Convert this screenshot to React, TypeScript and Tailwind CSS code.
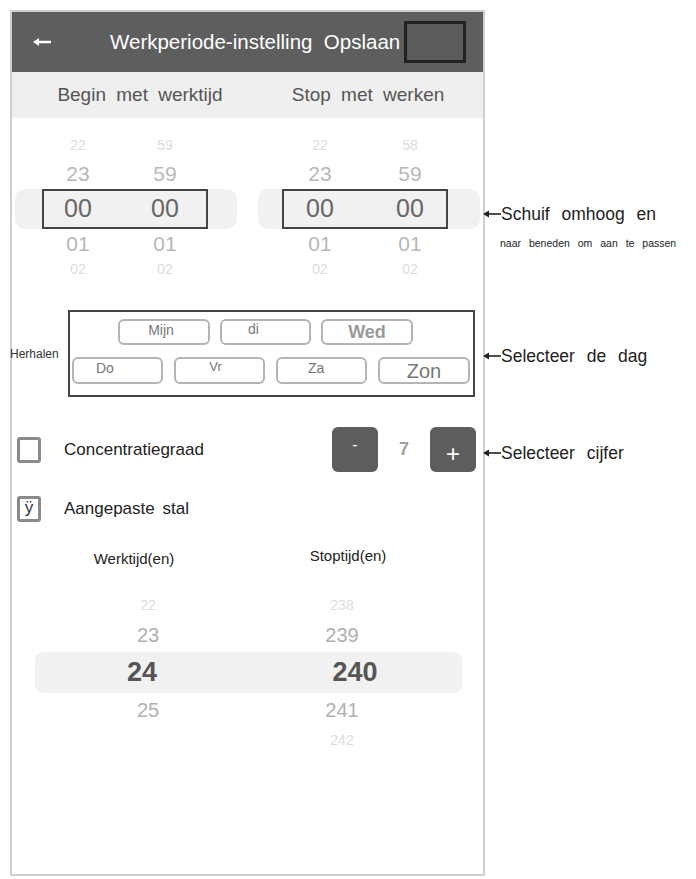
import React from 'react';

const font = { fontFamily: '"Liberation Sans", Arial, sans-serif' };

function SmallArrow() {
  return (
    <svg width="18" height="8" viewBox="0 0 18 8" className="shrink-0">
      <path d="M0 4 L6 0.5 L6 7.5 Z" fill="#222" />
      <line x1="5" y1="4" x2="18" y2="4" stroke="#222" strokeWidth="1.6" />
    </svg>
  );
}

function Callout({ top, children }: any) {
  return (
    <div className="absolute left-[483px] flex items-center" style={{ top }}>
      <SmallArrow />
      <span className="text-[17.5px] text-[#222] [word-spacing:7px]">{children}</span>
    </div>
  );
}

function TimeRow({ vals, kind }: { vals: string[]; kind: 'far' | 'near' | 'sel' }) {
  const txt =
    kind === 'far'
      ? 'text-[14px] text-[#dcdcdc]'
      : kind === 'near'
        ? 'text-[21px] text-[#b8b8b8]'
        : 'text-[25px] text-[#666]';
  const band = kind === 'sel' ? 'bg-[#f1f1f1]' : '';
  const box = kind === 'sel' ? 'border-[#444]' : 'border-transparent';
  return (
    <div className="flex h-full">
      <div className={`ml-[3px] w-[222px] h-full rounded-[10px] ${band} flex`}>
        <div className={`ml-[27px] w-[166px] h-full border-2 ${box} flex items-center pl-[4px] gap-[27px]`}>
          <span className={`w-[60px] text-center ${txt}`}>{vals[0]}</span>
          <span className={`w-[60px] text-center ${txt}`}>{vals[1]}</span>
        </div>
      </div>
      <div className={`ml-[21px] w-[222px] h-full rounded-[10px] ${band} flex`}>
        <div className={`ml-[24px] w-[166px] h-full border-2 ${box} flex items-center pl-[6px] gap-[30px]`}>
          <span className={`w-[60px] text-center ${txt}`}>{vals[2]}</span>
          <span className={`w-[60px] text-center ${txt}`}>{vals[3]}</span>
        </div>
      </div>
    </div>
  );
}

function DayBtn({ label, w, cls }: any) {
  return (
    <div
      className={`h-full rounded-[6px] border-2 border-[#b4b4b4] text-[#777] flex ${cls}`}
      style={{ width: w }}
    >
      {label}
    </div>
  );
}

function Check({ mark }: { mark?: string }) {
  return (
    <div className="ml-[5px] w-[24px] h-[26px] rounded-[3px] border-[3px] border-[#8a8a8a] flex items-start justify-center text-[17px] leading-[18px] text-[#333]">
      {mark}
    </div>
  );
}

export default function App() {
  return (
    <div className="relative w-[696px] h-[879px] bg-white overflow-hidden" style={font}>
      <div className="ml-[10px] mt-[10px] w-[475px] h-[866px] border-2 border-[#cfcfcf] flex flex-col">
        {/* header */}
        <div className="h-[60px] bg-[#5e5e5e] flex items-center shrink-0">
          <svg width="18" height="10" viewBox="0 0 18 10" className="ml-[21px]">
            <path d="M0 5 L6 1 L6 9 Z" fill="#fff" />
            <line x1="5" y1="5" x2="18" y2="5" stroke="#fff" strokeWidth="2.5" />
          </svg>
          <span className="ml-[59px] text-[20.5px] text-white whitespace-nowrap">
            Werkperiode-instelling&nbsp; Opslaan
          </span>
          <div className="ml-[4px] w-[62px] h-[42px] border-[3px] border-[#222] bg-[#5b5b5b]" />
        </div>

        {/* sub header */}
        <div className="h-[46px] bg-[#efefef] flex items-center shrink-0 text-[19px] text-[#555] [word-spacing:5px]">
          <span className="w-[256px] text-center">Begin met werktijd</span>
          <span className="w-[200px] text-center">Stop met werken</span>
        </div>

        {/* time picker */}
        <div className="pt-[14px] flex flex-col">
          <div className="h-[26px]"><TimeRow vals={['22', '59', '22', '58']} kind="far" /></div>
          <div className="h-[31px]"><TimeRow vals={['23', '59', '23', '59']} kind="near" /></div>
          <div className="h-[40px]"><TimeRow vals={['00', '00', '00', '00']} kind="sel" /></div>
          <div className="h-[30px]"><TimeRow vals={['01', '01', '01', '01']} kind="near" /></div>
          <div className="h-[20px]"><TimeRow vals={['02', '02', '02', '02']} kind="far" /></div>
        </div>

        {/* repeat */}
        <div className="mt-[31px] flex items-center">
          <span className="text-[12px] text-[#333] -ml-[2px] w-[58px]">Herhalen</span>
          <div className="w-[407px] h-[87px] border-2 border-[#444] flex flex-col pt-[7px]">
            <div className="h-[26px] flex ml-[48px] gap-[10px]">
              <DayBtn label="Mijn" w={92} cls="text-[14px] justify-center pr-[6px] leading-[18px]" />
              <DayBtn label="di" w={91} cls="text-[14px] justify-center pr-[24px] leading-[16px]" />
              <DayBtn label="Wed" w={92} cls="text-[18px] font-bold text-[#999] justify-center items-center" />
            </div>
            <div className="h-[27px] flex ml-[2px] mt-[12px] gap-[11px]">
              <DayBtn label="Do" w={91} cls="text-[14px] pl-[22px] leading-[18px]" />
              <DayBtn label="Vr" w={91} cls="text-[13px] justify-center pr-[8px] leading-[16px]" />
              <DayBtn label="Za" w={91} cls="text-[14px] pl-[30px] leading-[18px]" />
              <DayBtn label="Zon" w={92} cls="text-[20px] justify-center items-center" />
            </div>
          </div>
        </div>

        {/* concentration */}
        <div className="mt-[30px] h-[45px] flex items-center">
          <Check />
          <span className="ml-[23px] text-[17px] text-[#222]">Concentratiegraad</span>
          <div className="ml-auto mr-[7px] flex items-center">
            <div className="w-[46px] h-[45px] rounded-[6px] bg-[#5e5e5e] flex justify-center pt-[6px] text-white text-[16px]">-</div>
            <span className="w-[52px] text-center text-[18px] font-bold text-[#a0a0a0]">7</span>
            <div className="w-[46px] h-[45px] rounded-[6px] bg-[#5e5e5e] flex justify-center items-end pb-[4px] text-white text-[24px] leading-[28px]">+</div>
          </div>
        </div>

        {/* custom */}
        <div className="mt-[23px] h-[28px] flex items-center">
          <Check mark="ÿ" />
          <span className="ml-[23px] text-[17px] text-[#222] [word-spacing:3px]">Aangepaste stal</span>
        </div>

        <div className="mt-[21px] h-[24px] flex items-center text-[15px] text-[#222]">
          <span className="ml-[76px] w-[92px] text-center pt-[6px]">Werktijd(en)</span>
          <span className="ml-[123px] w-[90px] text-center">Stoptijd(en)</span>
        </div>

        {/* count picker */}
        <div className="pt-[25px] flex flex-col">
          <div className="h-[24px] flex items-center text-[14px] text-[#dcdcdc]">
            <span className="ml-[96px] w-[80px] text-center">22</span>
            <span className="ml-[114px] w-[80px] text-center">238</span>
          </div>
          <div className="h-[35px] flex items-center text-[20px] text-[#b0b0b0]">
            <span className="ml-[96px] w-[80px] text-center">23</span>
            <span className="ml-[114px] w-[80px] text-center">239</span>
          </div>
          <div className="h-[41px] ml-[23px] w-[427px] rounded-[8px] bg-[#f1f1f1] flex items-center text-[27px] font-bold text-[#555]">
            <span className="ml-[67px] w-[80px] text-center">24</span>
            <span className="ml-[133px] w-[80px] text-center">240</span>
          </div>
          <div className="h-[34px] flex items-center text-[20px] text-[#b0b0b0]">
            <span className="ml-[96px] w-[80px] text-center">25</span>
            <span className="ml-[114px] w-[80px] text-center">241</span>
          </div>
          <div className="h-[26px] flex items-center text-[14px] text-[#dcdcdc]">
            <span className="ml-[96px] w-[80px] text-center"></span>
            <span className="ml-[114px] w-[80px] text-center">242</span>
          </div>
        </div>
      </div>

      {/* callouts */}
      <Callout top={201}>Schuif omhoog en</Callout>
      <div className="absolute left-[500px] top-[236px] text-[10.5px] text-[#222] [word-spacing:5px]">
        naar beneden om aan te passen
      </div>
      <Callout top={343}>Selecteer de dag</Callout>
      <Callout top={440}>Selecteer cijfer</Callout>
    </div>
  );
}
